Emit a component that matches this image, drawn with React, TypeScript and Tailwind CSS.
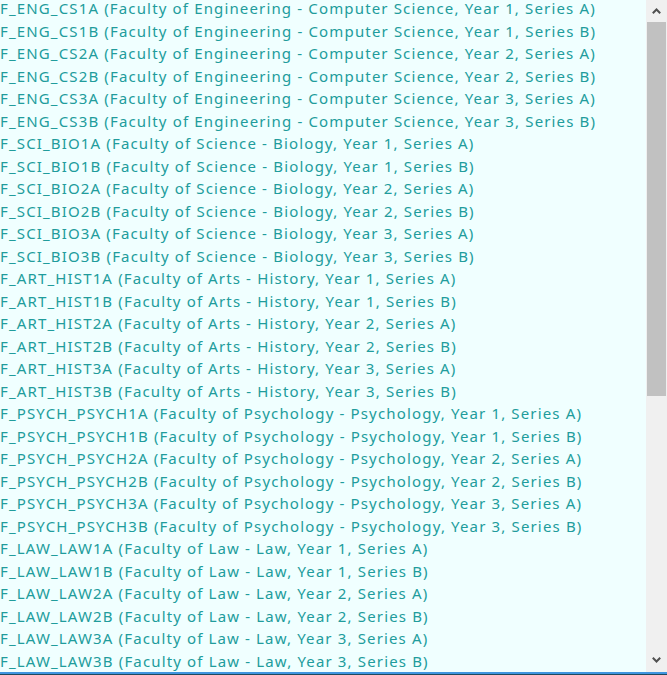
import React from 'react';

type Group = { code: string; faculty: string; dept: string; prefix: string };

const groups: Group[] = [
  { code: 'ENG', prefix: 'CS', faculty: 'Engineering', dept: 'Computer Science' },
  { code: 'SCI', prefix: 'BIO', faculty: 'Science', dept: 'Biology' },
  { code: 'ART', prefix: 'HIST', faculty: 'Arts', dept: 'History' },
  { code: 'PSYCH', prefix: 'PSYCH', faculty: 'Psychology', dept: 'Psychology' },
  { code: 'LAW', prefix: 'LAW', faculty: 'Law', dept: 'Law' },
];

const rows: string[] = [];
groups.forEach(g => {
  [1, 2, 3].forEach(year => {
    ['A', 'B'].forEach(series => {
      rows.push(
        `F_${g.code}_${g.prefix}${year}${series} (Faculty of ${g.faculty} - ${g.dept}, Year ${year}, Series ${series})`
      );
    });
  });
});

const App: React.FC = () => {
  return (
    <div className="h-[675px] w-[667px] flex flex-col bg-[#f0ffff] overflow-hidden">
      <div className="flex flex-1 min-h-0">
        <ul className="flex-1 overflow-hidden -mt-[3px] text-[15px] leading-[22.5px] tracking-[1.15px] text-[#219c9c] whitespace-nowrap" style={{ fontFamily: '"Noto Sans", "Open Sans", sans-serif' }}>
          {rows.map(r => (
            <li key={r} className="h-[22.5px]">{r}</li>
          ))}
        </ul>
        <div className="w-[21px] flex flex-col bg-[#f0f0f0]">
          <div className="h-[22px] flex items-center justify-center">
            <svg width="9" height="6" viewBox="0 0 9 6">
              <path d="M0.8 5.2 L4.5 1.5 L8.2 5.2" fill="none" stroke="#505050" strokeWidth="2" />
            </svg>
          </div>
          <div className="h-[374px] mx-[1px] bg-[#c1c1c1]" />
          <div className="flex-1" />
          <div className="h-[24px] flex items-center justify-center">
            <svg width="9" height="6" viewBox="0 0 9 6">
              <path d="M0.8 0.8 L4.5 4.5 L8.2 0.8" fill="none" stroke="#505050" strokeWidth="2" />
            </svg>
          </div>
        </div>
      </div>
      <div className="h-[2px] bg-[#3f95e0]" />
      <div className="h-[1px] bg-[#1d4a5e]" />
    </div>
  );
};

export default App;
